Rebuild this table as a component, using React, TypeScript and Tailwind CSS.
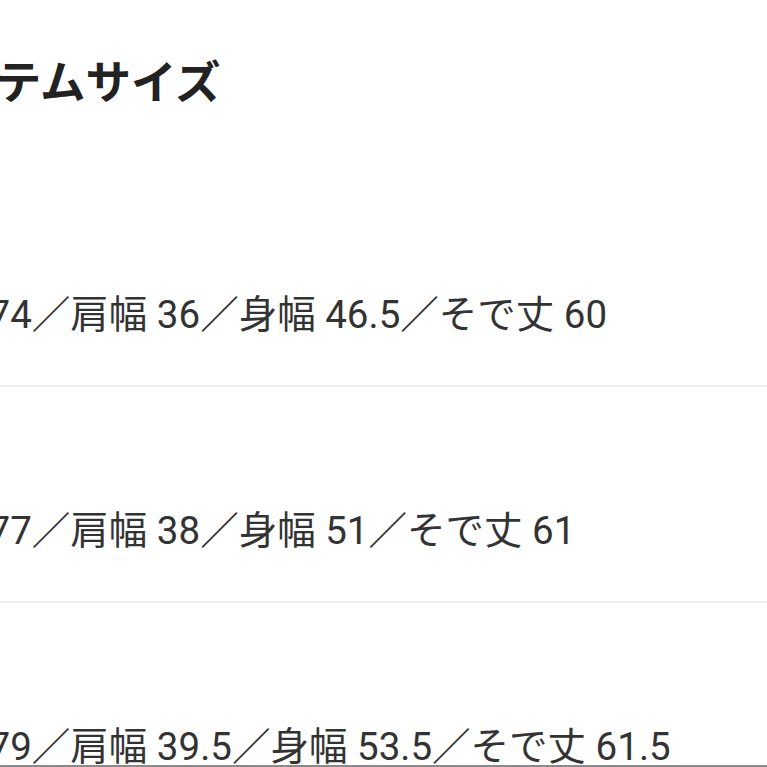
import React from "react";

const rows = [
  "着丈 74／肩幅 36／身幅 46.5／そで丈 60",
  "着丈 77／肩幅 38／身幅 51／そで丈 61",
  "着丈 79／肩幅 39.5／身幅 53.5／そで丈 61.5",
];

export default function App() {
  return (
    <div
      className="w-[767px] h-[767px] overflow-hidden bg-white relative"
      style={{ fontFamily: 'Roboto, "Noto Sans CJK JP", sans-serif' }}
    >
      <div className="h-[171px] pt-[56px]">
        <h1 className="ml-[-92px] whitespace-nowrap text-[45.5px] leading-[56px] font-bold text-[#222222]">
          アイテムサイズ
        </h1>
      </div>
      {rows.map((r, i) => (
        <div
          key={i}
          className="h-[216px] flex flex-col justify-end pb-[48px] border-b-2 border-[#efefef]"
        >
          <p className="ml-[-98px] whitespace-nowrap text-[38.5px] leading-[44px] text-[#333333]">
            {r}
          </p>
        </div>
      ))}
      <div className="absolute left-0 right-0 bottom-0 h-[2px] bg-[#8a8a8a]" />
    </div>
  );
}
